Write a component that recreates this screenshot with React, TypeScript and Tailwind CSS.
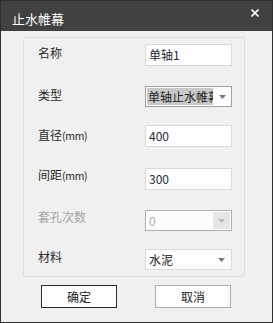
const cjk = { fontFamily: '"Noto Sans CJK SC", "Liberation Sans", sans-serif' };

function Arrow({ color = "#7a7a7a" }: { color?: string }) {
  return (
    <svg width="7" height="4" viewBox="0 0 7 4" className="block">
      <path d="M0 0h7L3.5 4z" fill={color} />
    </svg>
  );
}

function Label({ text, unit, mt, muted }: { text: string; unit?: string; mt: number; muted?: boolean }) {
  return (
    <div
      className={`w-[107px] shrink-0 text-[12px] leading-[16px] ${muted ? "text-[#a3a3a3]" : "text-[#2a2a2a]"}`}
      style={{ marginTop: mt }}
    >
      {text}
      {unit && <span className="text-[10.5px] tracking-[-0.3px]">{unit}</span>}
    </div>
  );
}

function TextBox({ value }: { value: string }) {
  return (
    <div className="w-[87px] h-[22px] border border-[#d9d9d9] bg-[#fdfdfd] flex items-center pl-[3px] text-[12px] text-[#262a3a] overflow-hidden whitespace-nowrap">
      {value}
    </div>
  );
}

export default function App() {
  return (
    <div
      className="w-[273px] h-[323px] border border-[#2f2f2f] bg-[#f0f0f0] flex flex-col overflow-hidden"
      style={cjk}
    >
      <div className="h-[30px] shrink-0 bg-[#414141] flex items-center justify-between pl-[11px] pr-[13px]">
        <span className="text-white text-[13px] leading-none pt-[4px]">止水帷幕</span>
        <svg width="8" height="8" viewBox="0 0 8 8" className="-mt-[6px]">
          <path d="M0.5 0.5l7 7M7.5 0.5l-7 7" stroke="#ffffff" strokeWidth="1.6" />
        </svg>
      </div>

      <div className="ml-[22px] mt-[6px] w-[222px] h-[240px] border border-[#dcdcdc] rounded-[3px] pl-[14px] pt-[6px] flex flex-col">
        <div className="flex items-start h-[22px]">
          <Label text="名称" mt={1} />
          <TextBox value="单轴1" />
        </div>

        <div className="flex items-start h-[21px] mt-[20px]">
          <Label text="类型" mt={1} />
          <div className="w-[87px] h-[21px] border border-[#a0a0a0] bg-[#fdfdfd] flex items-center pl-[1px] pr-[5px]">
            <div className="w-[66px] h-[17px] bg-[#c8c8c8] text-[12px] leading-[17px] text-[#222] overflow-hidden whitespace-nowrap pl-[1px]">
              单轴止水帷幕
            </div>
            <div className="ml-auto">
              <Arrow />
            </div>
          </div>
        </div>

        <div className="flex items-start h-[22px] mt-[18px]">
          <Label text="直径" unit="(mm)" mt={2} />
          <TextBox value="400" />
        </div>

        <div className="flex items-start h-[22px] mt-[21px]">
          <Label text="间距" unit="(mm)" mt={-1} />
          <TextBox value="300" />
        </div>

        <div className="flex items-start h-[21px] mt-[20px]">
          <Label text="套孔次数" mt={-1} muted />
          <div className="w-[87px] h-[21px] border border-[#b0b0b0] bg-[#fcfcfc] flex items-stretch">
            <div className="flex-1 flex items-center pl-[3px] text-[12px] text-[#ababab]">0</div>
            <div className="w-[17px] bg-[#e6e6e6] my-[1px] mr-[1px] flex items-center justify-center">
              <Arrow color="#b9b9b9" />
            </div>
          </div>
        </div>

        <div className="flex items-start h-[21px] mt-[18px]">
          <Label text="材料" mt={0} />
          <div className="w-[87px] h-[21px] border border-[#d9d9d9] bg-[#fdfdfd] flex items-center pl-[3px] pr-[6px] text-[12px] text-[#222]">
            水泥
            <div className="ml-auto">
              <Arrow />
            </div>
          </div>
        </div>
      </div>

      <div className="flex mt-[8px] pl-[40px] gap-[38px]">
        <button className="w-[76px] h-[23px] border border-[#2b2b2b] bg-[#fdfdfd] text-[12px] text-[#222]">
          确定
        </button>
        <button className="w-[76px] h-[23px] border border-[#adadad] bg-[#fdfdfd] text-[12px] text-[#222]">
          取消
        </button>
      </div>
    </div>
  );
}
